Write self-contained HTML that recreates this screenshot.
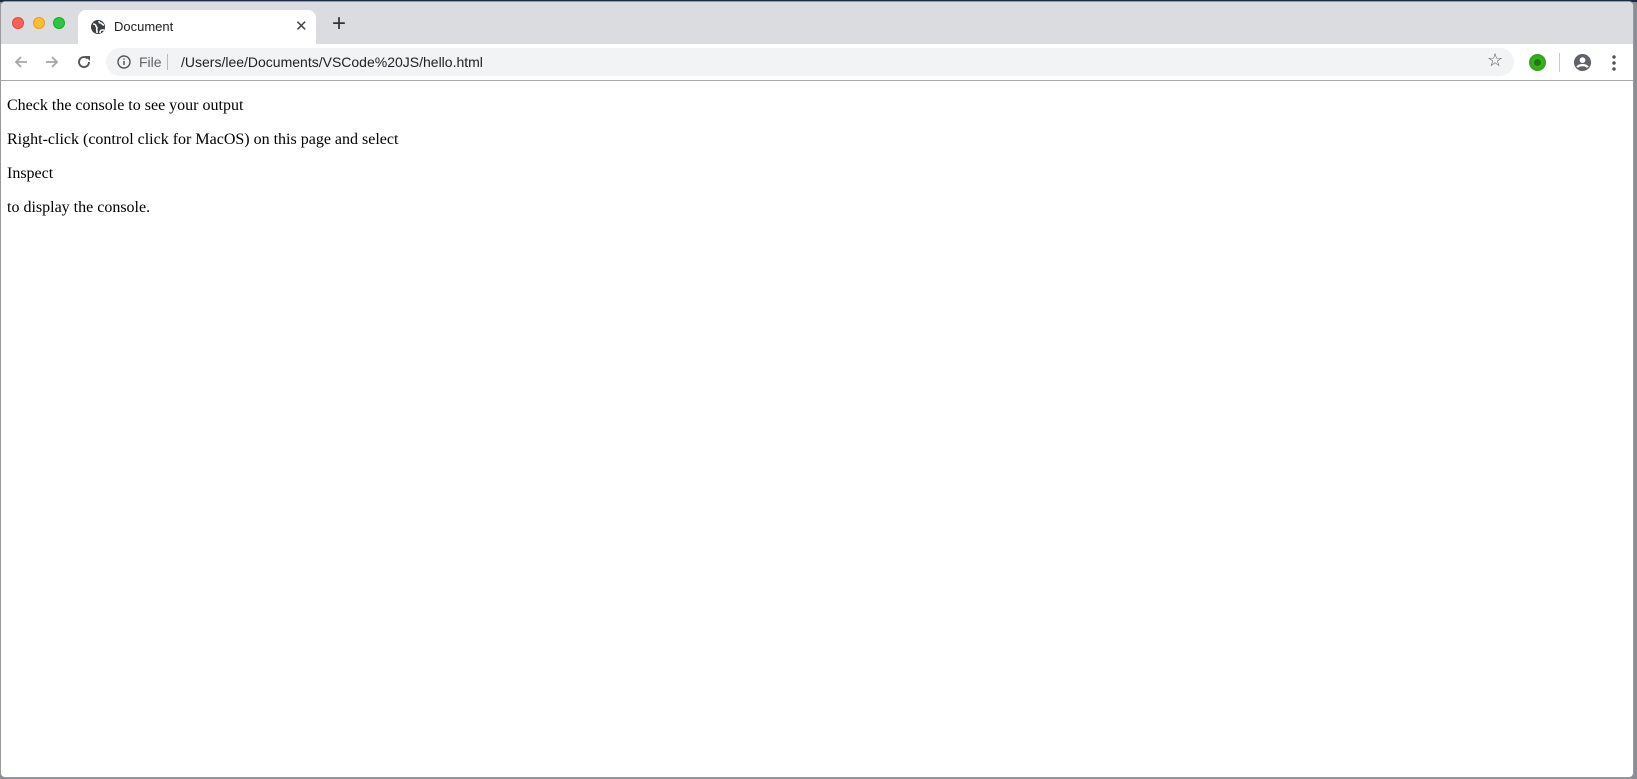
<!DOCTYPE html>
<html><head><meta charset="utf-8"><style>
*{margin:0;padding:0;box-sizing:border-box}
html,body{width:1637px;height:779px;overflow:hidden;background:#8a8d93;font-family:"Liberation Sans",sans-serif}
.win{position:absolute;left:0;top:1px;width:1634px;height:777px;background:#fff;border-radius:5px;overflow:hidden;border:1px solid #9a9a9a}
.top{position:absolute;left:0;top:0;right:0;height:42px;background:#dadce0}
.dot{position:absolute;top:15px;width:12px;height:12px;border-radius:50%}
.tab{position:absolute;left:77px;top:8px;width:238px;height:35px;background:#fff;border-radius:8px 8px 0 0}
.tool{position:absolute;left:0;top:42px;right:0;height:37px;background:#fff;border-bottom:1px solid #a8a8a8}
.addr{position:absolute;left:105px;top:4px;width:1408px;height:28px;border-radius:14px;background:#f1f3f4}
.t{position:absolute;font-family:"Liberation Serif",serif;font-size:16px;color:#000;left:6px;white-space:nowrap}
</style></head><body>
<div style="position:absolute;left:0;top:0;width:1637px;height:2px;background:#1c2a48"></div>
<div class="win">
<div class="top">
<div class="dot" style="left:11px;background:#fe5f57;border:1px solid #e0443e"></div>
<div class="dot" style="left:32px;background:#febc2e;border:1px solid #dea123"></div>
<div class="dot" style="left:52px;background:#28c840;border:1px solid #1aab29"></div>
<div class="tab">
<svg style="position:absolute;left:12px;top:9px" width="16" height="16" viewBox="0 0 16 16"><circle cx="8" cy="8" r="7" fill="#3c4043"/><path d="M3 5c2 0 3 1 3 2s1 1 1 2-1 2 0 3v2M9 2c0 2 1 2 2 2s1 2 3 2M10 14c0-2 1-3 2-3h2" stroke="#fff" stroke-width="1.6" fill="none"/></svg>
<div style="position:absolute;left:36px;top:9px;font-size:13px;color:#222">Document</div>
<div style="position:absolute;left:217px;top:7px;font-size:15px;color:#444">✕</div>
</div>
<div style="position:absolute;left:331px;top:8px;font-size:24px;color:#333;font-weight:300">+</div>
</div>
<div class="tool">
<svg style="position:absolute;left:12px;top:10px" width="16" height="16" viewBox="0 0 16 16"><path d="M14 8H3M8 3L3 8l5 5" stroke="#a6a6a6" stroke-width="1.8" fill="none"/></svg>
<svg style="position:absolute;left:43px;top:10px" width="16" height="16" viewBox="0 0 16 16"><path d="M2 8h11M8 3l5 5-5 5" stroke="#a6a6a6" stroke-width="1.8" fill="none"/></svg>
<svg style="position:absolute;left:75px;top:10px" width="16" height="16" viewBox="0 0 16 16"><path d="M13 8a5 5 0 1 1-1.5-3.5" stroke="#555" stroke-width="1.9" fill="none"/><path d="M9 2h5v5z" fill="#555"/></svg>
<div class="addr">
<svg style="position:absolute;left:11px;top:7px" width="14" height="14" viewBox="0 0 14 14"><circle cx="7" cy="7" r="6" stroke="#555" stroke-width="1.4" fill="none"/><path d="M7 6v4M7 3.5v1.2" stroke="#555" stroke-width="1.5"/></svg>
<div style="position:absolute;left:33px;top:6px;font-size:14px;color:#5f6368">File</div>
<div style="position:absolute;left:61px;top:6px;width:1px;height:16px;background:#bbb"></div>
<div style="position:absolute;left:75px;top:6px;font-size:14px;color:#202124">/Users/lee/Documents/VSCode%20JS/hello.html</div>
<div style="position:absolute;left:1381px;top:2px;font-size:18px;color:#555">☆</div>
</div>
<div style="position:absolute;left:1528px;top:10px;width:17px;height:17px;border-radius:50%;background:radial-gradient(circle,#1d7a12 0 3px,#3ab51e 4px,#2c8d17 100%)"></div>
<div style="position:absolute;left:1558px;top:9px;width:1px;height:19px;background:#ccc"></div>
<svg style="position:absolute;left:1572px;top:9px" width="19" height="19" viewBox="0 0 20 20"><circle cx="10" cy="10" r="9" fill="#5f6368"/><circle cx="10" cy="7.5" r="3" fill="#fff"/><path d="M4.5 15c2-3 9-3 11 0" stroke="#fff" stroke-width="2.4" fill="none"/></svg>
<div style="position:absolute;left:1611px;top:10px;width:4px;height:18px;background:radial-gradient(circle,#555 1.5px,transparent 2px) 0 0/4px 6px"></div>
</div>
<div class="t" style="top:95px">Check the console to see your output</div>
<div class="t" style="top:129px">Right-click (control click for MacOS) on this page and select</div>
<div class="t" style="top:163px">Inspect</div>
<div class="t" style="top:197px">to display the console.</div>
</div>
</body></html>
